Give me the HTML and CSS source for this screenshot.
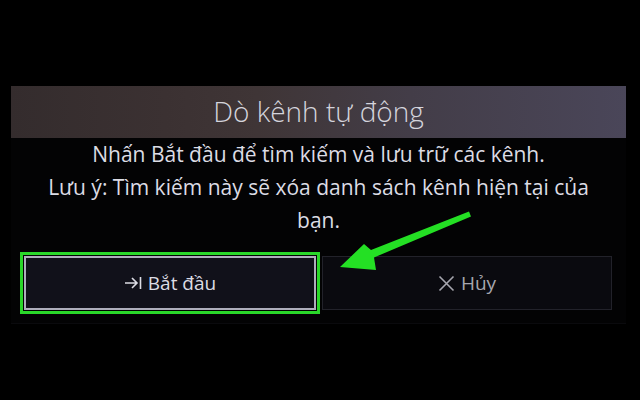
FILE: index.html
```html
<!DOCTYPE html>
<html lang="vi">
<head>
<meta charset="utf-8">
<title>Dò kênh tự động</title>
<link rel="stylesheet" href="styles.css">
</head>
<body>
<div class="screen">
  <section class="dialog">
    <h1 class="dialog-title">Dò kênh tự động</h1>
    <div class="dialog-message">
      <p>Nhấn Bắt đầu để tìm kiếm và lưu trữ các kênh.</p>
      <p>Lưu ý: Tìm kiếm này sẽ xóa danh sách kênh hiện tại của bạn.</p>
    </div>
    <div class="dialog-actions">
      <button class="btn btn-focused">
        <svg class="btn-icon" width="18" height="16" viewBox="0 0 18 16">
          <path d="M1 8 H13 M8 3 L13 8 L8 13 M16.5 2 V14" fill="none" stroke="currentColor" stroke-width="1.6"/>
        </svg>
        <span>Bắt đầu</span>
      </button>
      <button class="btn btn-muted">
        <svg class="btn-icon" width="17" height="17" viewBox="0 0 17 17">
          <path d="M1.5 1.5 L15.5 15.5 M15.5 1.5 L1.5 15.5" fill="none" stroke="currentColor" stroke-width="1.6"/>
        </svg>
        <span>Hủy</span>
      </button>
    </div>
  </section>
  <svg class="pointer" width="640" height="400" viewBox="0 0 640 400">
    <polygon points="340,267 376,270 374,257.5 471,216.5 469,211.5 371,250 364,244" fill="#24e024"/>
  </svg>
</div>
</body>
</html>
```

FILE: styles.css
```css
* { box-sizing: border-box; }

html, body {
  margin: 0;
  padding: 0;
  background: #000;
}

.screen {
  position: relative;
  width: 640px;
  height: 400px;
  overflow: hidden;
  background: #000;
  padding-top: 86px;
  padding-left: 11px;
  font-family: "Open Sans", "Noto Sans", sans-serif;
}

.dialog {
  width: 615px;
  height: 238px;
  background: #030304;
  border-bottom: 1px solid #0a0a0d;
}

.dialog-title {
  margin: 0;
  height: 52px;
  line-height: 50px;
  text-align: center;
  font-size: 28px;
  font-weight: 300;
  color: #d4d4dc;
  background: linear-gradient(90deg, #342c2d 0%, #3b3132 25%, #3f3536 40%, #433d48 65%, #4a4659 100%);
}

.dialog-message {
  padding: 0 34px;
  text-align: center;
  font-size: 21px;
  line-height: 33px;
  color: #dcdce4;
}

.dialog-message p {
  margin: 0;
}

.dialog-actions {
  display: flex;
  gap: 6px;
  margin-top: 19px;
  padding: 0 14px 0 13px;
}

.btn {
  flex: 1;
  height: 54px;
  display: flex;
  align-items: center;
  justify-content: center;
  gap: 6px;
  font-family: inherit;
  font-size: 19px;
  background: #0a0a0f;
  border: 1px solid #22222a;
  color: #a6a6ae;
}

.btn-focused {
  flex: 0 0 292px;
  border: 2px solid #aeaebc;
  background: #11111a;
  color: #dcdce4;
  font-weight: 500;
  outline: 3px solid #2ad82a;
  outline-offset: 1px;
}

.btn-icon {
  display: block;
}

.pointer {
  position: absolute;
  left: 0;
  top: 0;
  pointer-events: none;
}
```
